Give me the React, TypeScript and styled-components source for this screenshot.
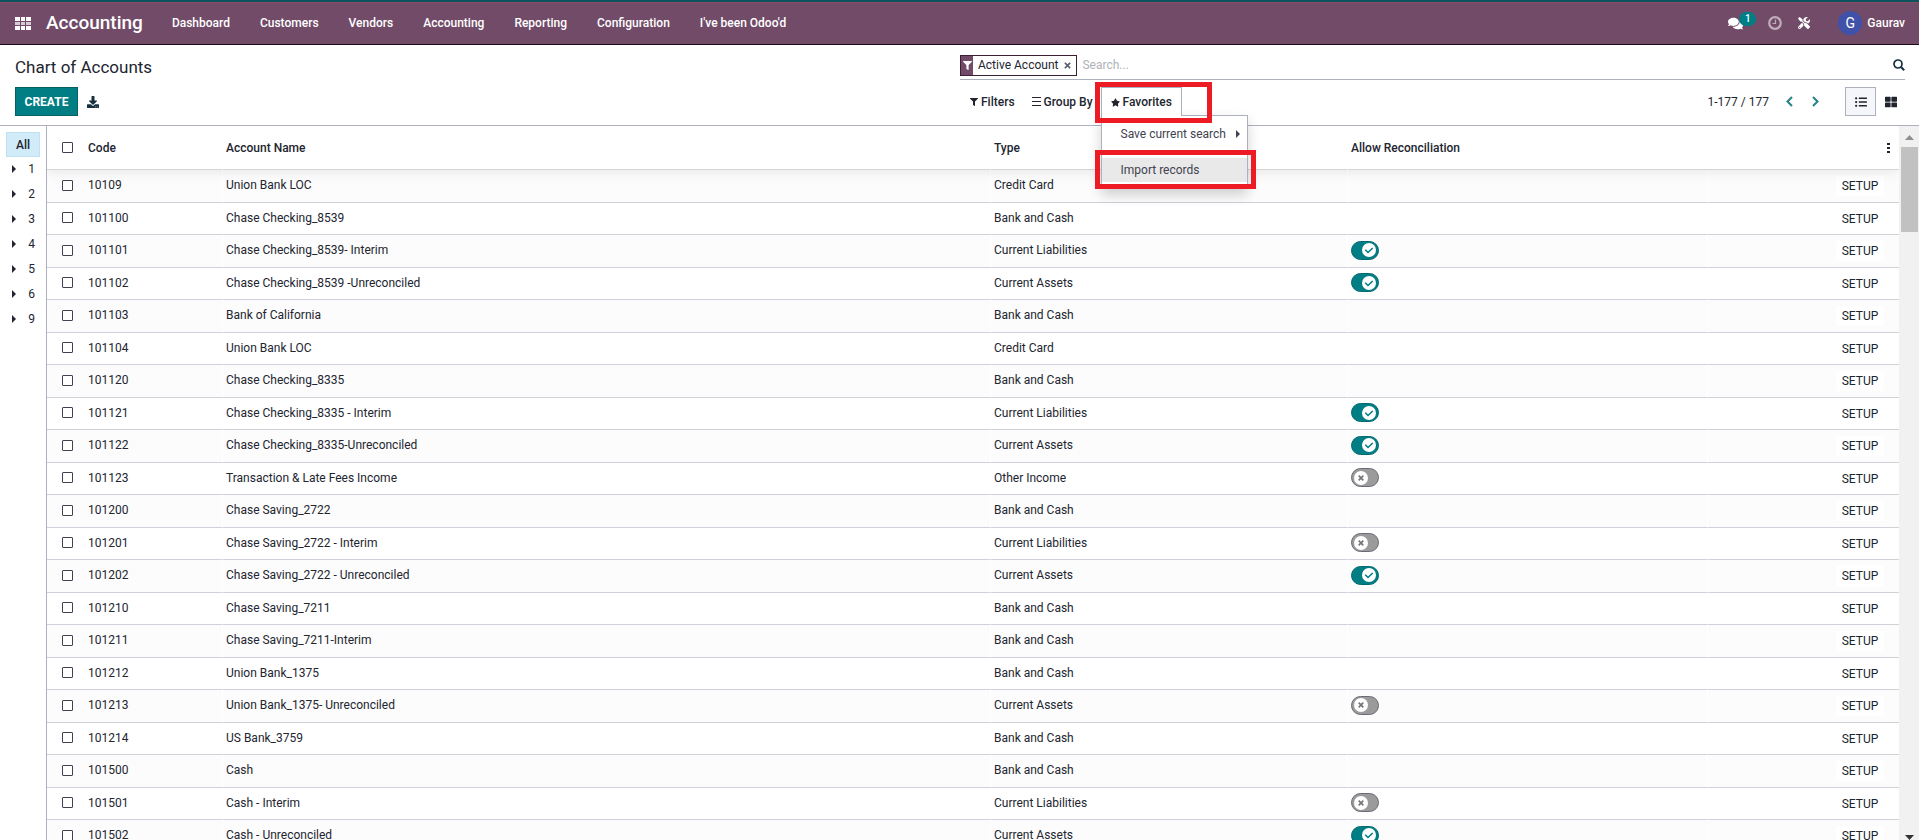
import React from "react";
import styled, { createGlobalStyle } from "styled-components";
import {
  FaComments,
  FaDownload,
  FaFilter,
  FaListUl,
  FaStar,
  FaThLarge,
  FaTimes,
  FaTools,
} from "react-icons/fa";

const GlobalStyle = createGlobalStyle`
  * { box-sizing: border-box; }
  body {
    margin: 0;
    overflow: hidden;
    background: #fff;
    color: #22252f;
    font-family: Roboto, "Liberation Sans", sans-serif;
    font-size: 12px;
    line-height: 16px;
  }
  button, input {
    margin: 0;
    padding: 0;
    border: 0;
    background: none;
    color: inherit;
    font: inherit;
  }
  a { color: inherit; text-decoration: none; }
`;

const Page = styled.div`
  display: flex;
  flex-direction: column;
  height: 100vh;
`;

const TopBar = styled.header`
  display: flex;
  align-items: center;
  height: 45px;
  padding: 0 14px 0 15px;
  border-top: 2px solid #08545f;
  border-bottom: 1px solid #1c0a18;
  background: #714b67;
  box-shadow: inset 0 1px #8f4a63;
  color: #fff;
`;

const AppsButton = styled.button`
  display: flex;
  width: 31px;
`;

const Brand = styled.a`
  margin-right: 29px;
  font-size: 19px;
  font-weight: 500;
  line-height: 24px;
`;

const Nav = styled.nav`
  display: flex;
  flex: 1;
  gap: 30px;
  font-weight: 500;
`;

const SysTray = styled.div`
  display: flex;
  align-items: center;
  font-weight: 500;
`;

const TrayButton = styled.button<{ $gap: number; $dim?: boolean }>`
  position: relative;
  display: flex;
  margin-right: ${(p) => p.$gap}px;
  opacity: ${(p) => (p.$dim ? 0.55 : 1)};
`;

const Badge = styled.span`
  position: absolute;
  top: -4px;
  left: 11px;
  width: 17px;
  height: 14px;
  border-radius: 7px;
  background: #017e84;
  font-size: 10px;
  line-height: 14px;
  text-align: center;
`;

const UserButton = styled.button`
  display: flex;
  align-items: center;
  gap: 5px;
`;

const Avatar = styled.span`
  width: 24px;
  height: 24px;
  border-radius: 12px;
  background: #3f51a8;
  font-size: 14px;
  font-weight: 400;
  line-height: 24px;
  text-align: center;
`;

const ControlPanel = styled.section`
  display: grid;
  grid-template-columns: 1fr 1fr;
  height: 81px;
  padding: 0 14px 0 15px;
  border-bottom: 1px solid #adb0bd;
`;

const PanelSide = styled.div`
  display: flex;
  flex-direction: column;
`;

const Title = styled.h1`
  height: 42px;
  margin: 0;
  padding-top: 10px;
  font-size: 17px;
  font-weight: 400;
  line-height: 24px;
`;

const Actions = styled.div`
  display: flex;
  align-items: center;
  gap: 9px;
`;

const CreateButton = styled.button`
  width: 63px;
  height: 29px;
  border: 1px solid #016166;
  background: #017e84;
  color: #fff;
  font-weight: 700;
  text-transform: uppercase;
`;

const IconButton = styled.button`
  display: flex;
  color: #17303f;
`;

const SearchBar = styled.div`
  display: flex;
  align-items: center;
  height: 35px;
  padding-top: 6px;
  border-bottom: 1px solid #adb0bd;
`;

const Facet = styled.span`
  display: flex;
  align-items: center;
  height: 21px;
  margin-right: 5px;
  padding-right: 4px;
  border: 1px solid #3c1f36;
  gap: 5px;
`;

const FacetIcon = styled.span`
  display: flex;
  align-items: center;
  justify-content: center;
  width: 12px;
  height: 19px;
  background: #714b67;
  color: #fff;
`;

const FacetRemove = styled.button`
  display: flex;
  color: #5c6273;
`;

const SearchInput = styled.input`
  flex: 1;
  min-width: 0;
  outline: 0;
  &::placeholder { color: #b0b2b8; opacity: 1; }
`;

const Options = styled.div`
  display: flex;
  align-items: center;
  height: 43px;
  padding-left: 10px;
`;

const OptionButton = styled.button<{ $gap: number }>`
  display: flex;
  align-items: center;
  gap: 3px;
  margin-right: ${(p) => p.$gap}px;
  font-weight: 500;
`;

const Dropdown = styled.div`
  position: relative;
  z-index: 2;
`;

const DropdownToggle = styled(OptionButton)`
  position: relative;
  z-index: 1;
  width: 81px;
  height: 29px;
  margin: 0;
  padding-left: 9px;
  border: 1px solid #adb0bd;
  border-bottom: 0;
  background: #fff;
`;

const Menu = styled.div`
  position: absolute;
  top: 28px;
  left: 0;
  display: flex;
  flex-direction: column;
  gap: 12px;
  width: 147px;
  padding: 6px 0;
  border: 1px solid #adb0bd;
  background: #fff;
  box-shadow: 0 6px 12px rgba(0, 0, 0, 0.18);
`;

const MenuItem = styled.button<{ $active?: boolean }>`
  display: flex;
  align-items: center;
  justify-content: space-between;
  height: 24px;
  padding: 0 7px 0 19px;
  background: ${(p) => (p.$active ? "#e9e9e9" : "#fff")};
  color: #41434f;
`;

const Highlight = styled.span<{ $top: number; $width: number; $height: number }>`
  position: absolute;
  top: ${(p) => p.$top}px;
  left: -6px;
  z-index: 3;
  width: ${(p) => p.$width}px;
  height: ${(p) => p.$height}px;
  border: 5px solid #ed1c24;
  pointer-events: none;
`;

const Pager = styled.div`
  display: flex;
  align-items: center;
  margin-left: auto;
  margin-right: 24px;
`;

const PagerButton = styled.button`
  display: flex;
  margin-left: 15px;
  color: #2c8387;
`;

const ViewButton = styled.button<{ $active?: boolean }>`
  display: flex;
  align-items: center;
  justify-content: center;
  width: ${(p) => (p.$active ? "31px" : "29px")};
  height: 29px;
  border: ${(p) => (p.$active ? "1px solid #adb0bd" : "0")};
  background: ${(p) => (p.$active ? "#f5f6fa" : "none")};
`;

const Content = styled.main`
  display: flex;
  flex: 1;
  min-height: 0;
`;

const Sidebar = styled.aside`
  flex: none;
  width: 47px;
  padding: 6px;
  border-right: 1px solid #adb0bd;
`;

const SideItem = styled.button<{ $active?: boolean }>`
  display: flex;
  align-items: center;
  justify-content: ${(p) => (p.$active ? "center" : "space-between")};
  width: 34px;
  height: 25px;
  padding: ${(p) => (p.$active ? "0" : "0 5px 2px 6px")};
  border: ${(p) => (p.$active ? "1px solid #bfe2f2" : "0")};
  background: ${(p) => (p.$active ? "#d1ecf8" : "none")};
  font-weight: ${(p) => (p.$active ? 500 : 400)};
`;

const ListArea = styled.div`
  flex: 1;
  min-width: 0;
  overflow: hidden;
`;

const Table = styled.table`
  width: 100%;
  table-layout: fixed;
  border-collapse: separate;
  border-spacing: 0;
`;

const HeadCell = styled.th<{ $divided?: boolean }>`
  height: 44px;
  padding: 0 3px;
  border-bottom: 1px solid #d3d6d8;
  border-left: ${(p) => (p.$divided ? "1px solid #fff" : "0")};
  font-weight: 500;
  text-align: left;
`;

const HeadRow = styled.tr`
  position: relative;
  z-index: 1;
  box-shadow: 0 5px 10px rgba(0, 0, 0, 0.06);
`;

const Row = styled.tr`
  height: 32px;
  &:nth-child(odd) { height: 33px; background: #fcfcfc; }
`;

const Cell = styled.td<{ $divided?: boolean; $action?: boolean }>`
  padding: ${(p) => (p.$action ? "0 3px" : "0 3px 2px")};
  border-bottom: 1px solid #cfd0d8;
  border-left: ${(p) => (p.$divided ? "1px solid #fff" : "0")};
  white-space: nowrap;
`;

const Check = styled.input`
  display: block;
  width: 11px;
  height: 11px;
  margin-left: 12px;
  border: 1px solid #3f4250;
  border-radius: 1px;
  background: #fff;
  appearance: none;
`;

const Switch = styled.label<{ $on: boolean }>`
  display: flex;
  align-items: center;
  justify-content: ${(p) => (p.$on ? "flex-end" : "flex-start")};
  width: 28px;
  height: 19px;
  padding: 0 2px;
  border: 1px solid ${(p) => (p.$on ? "#016a70" : "#6a6a78")};
  border-radius: 10px;
  background: ${(p) => (p.$on ? "#017e84" : "#9b9b9b")};
`;

const SwitchInput = styled.input`
  position: absolute;
  width: 1px;
  height: 1px;
  opacity: 0;
  appearance: none;
`;

const SetupButton = styled.button`
  display: block;
  width: 48px;
  height: 20px;
  margin-left: auto;
  margin-right: 12px;
  background: #fff;
  color: #17262f;
  text-transform: uppercase;
`;

const KebabButton = styled.button`
  display: flex;
  margin-left: auto;
  margin-right: 6px;
`;

const ScrollTrack = styled.div`
  display: flex;
  flex: none;
  flex-direction: column;
  align-items: center;
  width: 20px;
  padding-top: 9px;
  background: #f1f1f1;
`;

const ScrollThumb = styled.div`
  width: 17px;
  height: 85px;
  margin-top: 7px;
  margin-bottom: auto;
  background: #c1c1c1;
`;

const AppsIcon = () => (
  <svg width="16" height="13" viewBox="0 0 16 13" shapeRendering="crispEdges" aria-hidden="true">
    <path d="M0 0h5v4H0zM6 0h4v4H6zM11 0h5v4h-5z" fill="#fff" />
    <path d="M0 5h5v3H0zM6 5h4v3H6zM11 5h5v3h-5z" fill="#d6cad3" />
    <path d="M0 9h5v4H0zM6 9h4v4H6zM11 9h5v4h-5z" fill="#fff" />
  </svg>
);

const ClockIcon = () => (
  <svg width="14" height="14" viewBox="0 0 14 14" fill="none" stroke="currentColor" aria-hidden="true">
    <circle cx="7" cy="7" r="5.8" strokeWidth="2.2" />
    <path d="M7.5 3.5v4H4.5" strokeWidth="1.2" />
  </svg>
);

const SearchIcon = () => (
  <svg width="12" height="12" viewBox="0 0 12 12" fill="none" stroke="currentColor" aria-hidden="true">
    <circle cx="5" cy="5" r="4" strokeWidth="1.7" />
    <path d="M8 8l3.2 3.2" strokeWidth="2" />
  </svg>
);

const ChevronIcon = ({ next }: { next?: boolean }) => (
  <svg width="11" height="11" viewBox="0 0 11 11" fill="none" stroke="currentColor" aria-hidden="true">
    <path d={next ? "M3 1l4.5 4.5L3 10" : "M8 1L3.5 5.5 8 10"} strokeWidth="2.1" />
  </svg>
);

const CaretIcon = () => (
  <svg width="4" height="8" viewBox="0 0 4 8" aria-hidden="true">
    <path d="M0 0l4 4-4 4z" fill="currentColor" />
  </svg>
);

const BarsIcon = () => (
  <svg width="9" height="9" viewBox="0 0 9 9" aria-hidden="true">
    <path d="M0 .5h9M0 4.5h9M0 8.5h9" stroke="currentColor" strokeWidth="1" />
  </svg>
);

const KebabIcon = () => (
  <svg width="3" height="10" viewBox="0 0 3 10" aria-hidden="true">
    <path d="M0 0h3v2H0zM0 4h3v2H0zM0 8h3v2H0z" fill="currentColor" />
  </svg>
);

const SwitchKnob = ({ on }: { on: boolean }) => (
  <svg width="14" height="14" viewBox="0 0 14 14" aria-hidden="true">
    <circle cx="7" cy="7" r="7" fill="#fff" />
    {on ? (
      <path d="M3.3 6.8L6 9.5 10.7 5" fill="none" stroke="#017e84" strokeWidth="1.6" />
    ) : (
      <path d="M4.7 4.7l4.6 4.6M9.3 4.7L4.7 9.3" fill="none" stroke="#777" strokeWidth="1.7" />
    )}
  </svg>
);

const ArrowIcon = ({ down, color }: { down?: boolean; color: string }) => (
  <svg width="9" height="5" viewBox="0 0 9 5" aria-hidden="true">
    <path d={down ? "M0 0h9L4.5 5z" : "M0 5h9L4.5 0z"} fill={color} />
  </svg>
);

type Account = [code: string, name: string, type: string, reconcile?: boolean];

const bank = "Bank and Cash";
const liabilities = "Current Liabilities";
const assets = "Current Assets";

const accounts: Account[] = [
  ["10109", "Union Bank LOC", "Credit Card"],
  ["101100", "Chase Checking_8539", bank],
  ["101101", "Chase Checking_8539- Interim", liabilities, true],
  ["101102", "Chase Checking_8539 -Unreconciled", assets, true],
  ["101103", "Bank of California", bank],
  ["101104", "Union Bank LOC", "Credit Card"],
  ["101120", "Chase Checking_8335", bank],
  ["101121", "Chase Checking_8335 - Interim", liabilities, true],
  ["101122", "Chase Checking_8335-Unreconciled", assets, true],
  ["101123", "Transaction & Late Fees Income", "Other Income", false],
  ["101200", "Chase Saving_2722", bank],
  ["101201", "Chase Saving_2722 - Interim", liabilities, false],
  ["101202", "Chase Saving_2722 - Unreconciled", assets, true],
  ["101210", "Chase Saving_7211", bank],
  ["101211", "Chase Saving_7211-Interim", bank],
  ["101212", "Union Bank_1375", bank],
  ["101213", "Union Bank_1375- Unreconciled", assets, false],
  ["101214", "US Bank_3759", bank],
  ["101500", "Cash", bank],
  ["101501", "Cash - Interim", liabilities, false],
  ["101502", "Cash - Unreconciled", assets, true],
];

const menus = ["Dashboard", "Customers", "Vendors", "Accounting", "Reporting", "Configuration", "I've been Odoo'd"];

export default function App() {
  return (
    <Page>
      <GlobalStyle />
      <TopBar>
        <AppsButton aria-label="Apps"><AppsIcon /></AppsButton>
        <Brand href="#">Accounting</Brand>
        <Nav>
          {menus.map((menu) => <a href="#" key={menu}>{menu}</a>)}
        </Nav>
        <SysTray>
          <TrayButton $gap={25} aria-label="Messages"><FaComments size={15} /><Badge>1</Badge></TrayButton>
          <TrayButton $gap={16} $dim aria-label="Activities"><ClockIcon /></TrayButton>
          <TrayButton $gap={28} aria-label="Developer tools"><FaTools size={12} /></TrayButton>
          <UserButton><Avatar>G</Avatar>Gaurav</UserButton>
        </SysTray>
      </TopBar>

      <ControlPanel>
        <PanelSide>
          <Title>Chart of Accounts</Title>
          <Actions>
            <CreateButton>Create</CreateButton>
            <IconButton aria-label="Export all"><FaDownload size={12} /></IconButton>
          </Actions>
        </PanelSide>
        <PanelSide>
          <SearchBar>
            <Facet>
              <FacetIcon><FaFilter size={9} /></FacetIcon>
              Active Account
              <FacetRemove aria-label="Remove filter"><FaTimes size={9} /></FacetRemove>
            </Facet>
            <SearchInput aria-label="Search" placeholder="Search..." />
            <IconButton aria-label="Run search"><SearchIcon /></IconButton>
          </SearchBar>
          <Options>
            <OptionButton $gap={17}><FaFilter size={8} />Filters</OptionButton>
            <OptionButton $gap={8}><BarsIcon />Group By</OptionButton>
            <Dropdown>
              <DropdownToggle $gap={0}><FaStar size={9} />Favorites</DropdownToggle>
              <Menu>
                <MenuItem>Save current search<CaretIcon /></MenuItem>
                <MenuItem $active>Import records</MenuItem>
              </Menu>
              <Highlight $top={-5} $width={117} $height={41} />
              <Highlight $top={63} $width={161} $height={39} />
            </Dropdown>
            <Pager>
              1-177 / 177
              <PagerButton aria-label="Previous"><ChevronIcon /></PagerButton>
              <PagerButton aria-label="Next"><ChevronIcon next /></PagerButton>
            </Pager>
            <ViewButton $active aria-label="List view"><FaListUl size={12} /></ViewButton>
            <ViewButton aria-label="Kanban view"><FaThLarge size={12} /></ViewButton>
          </Options>
        </PanelSide>
      </ControlPanel>

      <Content>
        <Sidebar>
          <SideItem $active>All</SideItem>
          {["1", "2", "3", "4", "5", "6", "9"].map((group) => (
            <SideItem key={group}><CaretIcon />{group}</SideItem>
          ))}
        </Sidebar>
        <ListArea>
          <Table>
            <colgroup>
              <col width="38" />
              <col width="137" />
              <col />
              <col width="357" />
              <col width="360" />
              <col width="192" />
            </colgroup>
            <thead>
              <HeadRow>
                <HeadCell><Check type="checkbox" aria-label="Select all" /></HeadCell>
                <HeadCell>Code</HeadCell>
                <HeadCell $divided>Account Name</HeadCell>
                <HeadCell $divided>Type</HeadCell>
                <HeadCell $divided>Allow Reconciliation</HeadCell>
                <HeadCell><KebabButton aria-label="Optional columns"><KebabIcon /></KebabButton></HeadCell>
              </HeadRow>
            </thead>
            <tbody>
              {accounts.map(([code, name, type, reconcile]) => (
                <Row key={code}>
                  <Cell><Check type="checkbox" aria-label={`Select ${code}`} /></Cell>
                  <Cell>{code}</Cell>
                  <Cell $divided>{name}</Cell>
                  <Cell $divided>{type}</Cell>
                  <Cell $divided>
                    {reconcile !== undefined && (
                      <Switch $on={reconcile}>
                        <SwitchInput type="checkbox" defaultChecked={reconcile} aria-label={`Allow reconciliation for ${code}`} />
                        <SwitchKnob on={reconcile} />
                      </Switch>
                    )}
                  </Cell>
                  <Cell $divided $action><SetupButton>Setup</SetupButton></Cell>
                </Row>
              ))}
            </tbody>
          </Table>
        </ListArea>
        <ScrollTrack aria-hidden="true">
          <ArrowIcon color="#8f8f8f" />
          <ScrollThumb />
          <ArrowIcon down color="#333" />
        </ScrollTrack>
      </Content>
    </Page>
  );
}
